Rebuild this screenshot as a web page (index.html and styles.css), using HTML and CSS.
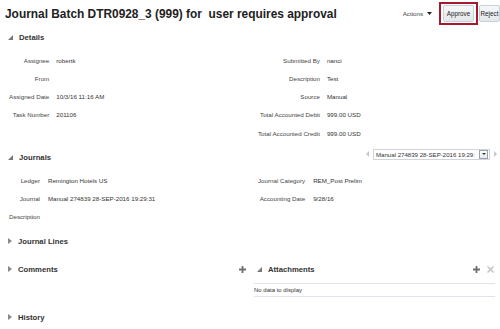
FILE: index.html
```html
<!DOCTYPE html>
<html lang="en">
<head>
    <meta charset="UTF-8">
    <title>Journal Batch Approval</title>
    <link rel="stylesheet" href="styles.css">
</head>
<body>
    <div class="page">
        <div class="page-header">
            <h1 class="page-title">Journal Batch DTR0928_3 (999) for&nbsp; user requires approval</h1>
            <div class="toolbar">
                <span class="actions">Actions
                    <svg class="caret" width="5" height="3" viewBox="0 0 5 3"><polygon points="0,0 5,0 2.5,3" fill="#222"/></svg>
                </span>
                <span class="approve-wrap"><button class="btn">Approve</button></span>
                <button class="btn btn-reject">Reject</button>
            </div>
        </div>

        <!-- Details -->
        <div class="section-header">
            <svg class="tri" width="5" height="5" viewBox="0 0 5 5"><polygon points="5,0 5,5 0,5" fill="#777"/></svg>
            <h2>Details</h2>
        </div>
        <div class="columns section-body">
            <dl class="form">
                <dt>Assignee</dt><dd>robertk</dd>
                <dt>From</dt><dd></dd>
                <dt>Assigned Date</dt><dd>10/3/16 11:16 AM</dd>
                <dt>Task Number</dt><dd>201106</dd>
            </dl>
            <dl class="form">
                <dt>Submitted By</dt><dd>nanci</dd>
                <dt>Description</dt><dd>Test</dd>
                <dt>Source</dt><dd>Manual</dd>
                <dt>Total Accounted Debit</dt><dd>999.00 USD</dd>
                <dt>Total Accounted Credit</dt><dd>999.00 USD</dd>
            </dl>
        </div>

        <!-- Journals -->
        <div class="section-header">
            <svg class="tri" width="5" height="5" viewBox="0 0 5 5"><polygon points="5,0 5,5 0,5" fill="#777"/></svg>
            <h2>Journals</h2>
            <div class="picker">
                <svg class="nav-arrow" width="3" height="6" viewBox="0 0 3 6"><polygon points="3,0 3,6 0,3" fill="#c8c8c8"/></svg>
                <div class="picker-box">
                    <span class="picker-text">Manual 274839 28-SEP-2016 19:29:</span>
                    <span class="picker-btn">
                        <svg width="4" height="2" viewBox="0 0 4 2"><polygon points="0,0 4,0 2,2" fill="#333"/></svg>
                    </span>
                </div>
                <svg class="nav-arrow" width="3" height="6" viewBox="0 0 3 6"><polygon points="0,0 3,3 0,6" fill="#c8c8c8"/></svg>
            </div>
        </div>
        <div class="columns section-body">
            <dl class="form form-wide-gap">
                <dt>Ledger</dt><dd>Remington Hotels US</dd>
                <dt>Journal</dt><dd>Manual 274839 28-SEP-2016 19:29:31</dd>
                <dt>Description</dt><dd></dd>
            </dl>
            <dl class="form form-wide-gap">
                <dt>Journal Category</dt><dd>REM_Post Prelim</dd>
                <dt>Accounting Date</dt><dd>9/28/16</dd>
            </dl>
        </div>

        <!-- Journal Lines -->
        <div class="section-header collapsed">
            <svg class="tri" width="4" height="6" viewBox="0 0 4 6"><polygon points="0,0 4,3 0,6" fill="#888"/></svg>
            <h2>Journal Lines</h2>
        </div>

        <!-- Comments / Attachments -->
        <div class="columns split">
            <div>
                <div class="section-header">
                    <svg class="tri" width="4" height="6" viewBox="0 0 4 6"><polygon points="0,0 4,3 0,6" fill="#888"/></svg>
                    <h2>Comments</h2>
                    <svg class="icon plus" width="7" height="7" viewBox="0 0 7 7"><path d="M3.5 0v7M0 3.5h7" stroke="#6f6f6f" stroke-width="1.8"/></svg>
                </div>
            </div>
            <div>
                <div class="section-header">
                    <svg class="tri" width="5" height="5" viewBox="0 0 5 5"><polygon points="5,0 5,5 0,5" fill="#777"/></svg>
                    <h2>Attachments</h2>
                    <svg class="icon plus" width="7" height="7" viewBox="0 0 7 7"><path d="M3.5 0v7M0 3.5h7" stroke="#6f6f6f" stroke-width="1.8"/></svg>
                    <svg class="icon close" width="7" height="7" viewBox="0 0 7 7"><path d="M0.5 0.5l6 6M6.5 0.5l-6 6" stroke="#c4c4c4" stroke-width="1.5"/></svg>
                </div>
                <div class="empty-table">No data to display</div>
            </div>
        </div>

        <!-- History -->
        <div class="section-header collapsed">
            <svg class="tri" width="4" height="6" viewBox="0 0 4 6"><polygon points="0,0 4,3 0,6" fill="#888"/></svg>
            <h2>History</h2>
        </div>
    </div>
</body>
</html>
```

FILE: styles.css
```css
body {
    margin: 0;
    font-family: "Liberation Sans", Arial, Helvetica, sans-serif;
    color: #333;
    background: #fff;
}
.page {
    padding: 0 5px;
}
.page-header {
    display: flex;
    align-items: center;
    justify-content: space-between;
    height: 27px;
    margin-right: -5px;
}
.page-title {
    margin: 0;
    font-size: 11.9px;
    font-weight: bold;
    color: #222;
    white-space: nowrap;
}
.toolbar {
    display: flex;
    align-items: center;
}
.actions {
    font-size: 6.2px;
    color: #444;
    margin-right: 7px;
    display: flex;
    align-items: center;
    gap: 4px;
}
.approve-wrap {
    border: 2px solid #a8172b;
    padding: 1px 2px;
    display: flex;
}
.btn {
    font-family: inherit;
    font-size: 6.3px;
    color: #222;
    height: 17px;
    width: 31px;
    padding: 0;
    background: linear-gradient(#f6f7f8, #e4e8eb);
    border: 1px solid #c8cfd6;
    border-radius: 2px;
}
.btn-reject {
    width: 21px;
    margin-left: 1px;
}
.section-header {
    display: flex;
    align-items: center;
    height: 20px;
}
.section-header h2 {
    margin: 0;
    font-size: 7.7px;
    font-weight: bold;
    color: #333;
}
.tri {
    margin: 0 6px 0 3px;
}
.collapsed {
    margin-bottom: 8px;
}
.section-body {
    padding: 4px 0 5px;
}
.columns {
    display: grid;
    grid-template-columns: 1fr 1fr;
    column-gap: 8px;
}
.form {
    margin: 0;
    padding-left: 4px;
    display: grid;
    grid-template-columns: max-content 1fr;
    grid-auto-rows: 18.25px;
    column-gap: 7px;
    align-items: center;
    align-content: start;
    font-size: 6.2px;
}
.form-wide-gap {
    column-gap: 8px;
}
.form dt {
    text-align: right;
    color: #444;
}
.form dd {
    margin: 0;
    color: #333;
}
.picker {
    margin-left: auto;
    margin-right: -3px;
    margin-bottom: 6px;
    display: flex;
    align-items: center;
    gap: 3px;
}
.picker-box {
    display: flex;
    align-items: center;
    width: 117px;
    height: 11px;
    border: 1px solid #cfd5db;
    background: #fff;
    box-sizing: border-box;
    padding-left: 2px;
}
.picker-text {
    flex: 1;
    white-space: nowrap;
    font-size: 6.1px;
    color: #333;
}
.picker-btn {
    display: flex;
    align-items: center;
    justify-content: center;
    width: 7px;
    height: 7px;
    margin: 0 1px;
    border: 1px solid #9aa3ab;
    background: linear-gradient(#fdfdfd, #e6e9ec);
}
.nav-arrow {
    margin: 0 1px;
}
.icon {
    flex: none;
}
.plus {
    margin-left: auto;
}
.close {
    margin-left: 7px;
    margin-right: 1px;
}
.split {
    margin-bottom: 10px;
}
.empty-table {
    margin-top: 4px;
    height: 12px;
    line-height: 12px;
    border-top: 1px solid #dfe4ea;
    border-bottom: 1px solid #dfe4ea;
    font-size: 6px;
    color: #333;
}
```
